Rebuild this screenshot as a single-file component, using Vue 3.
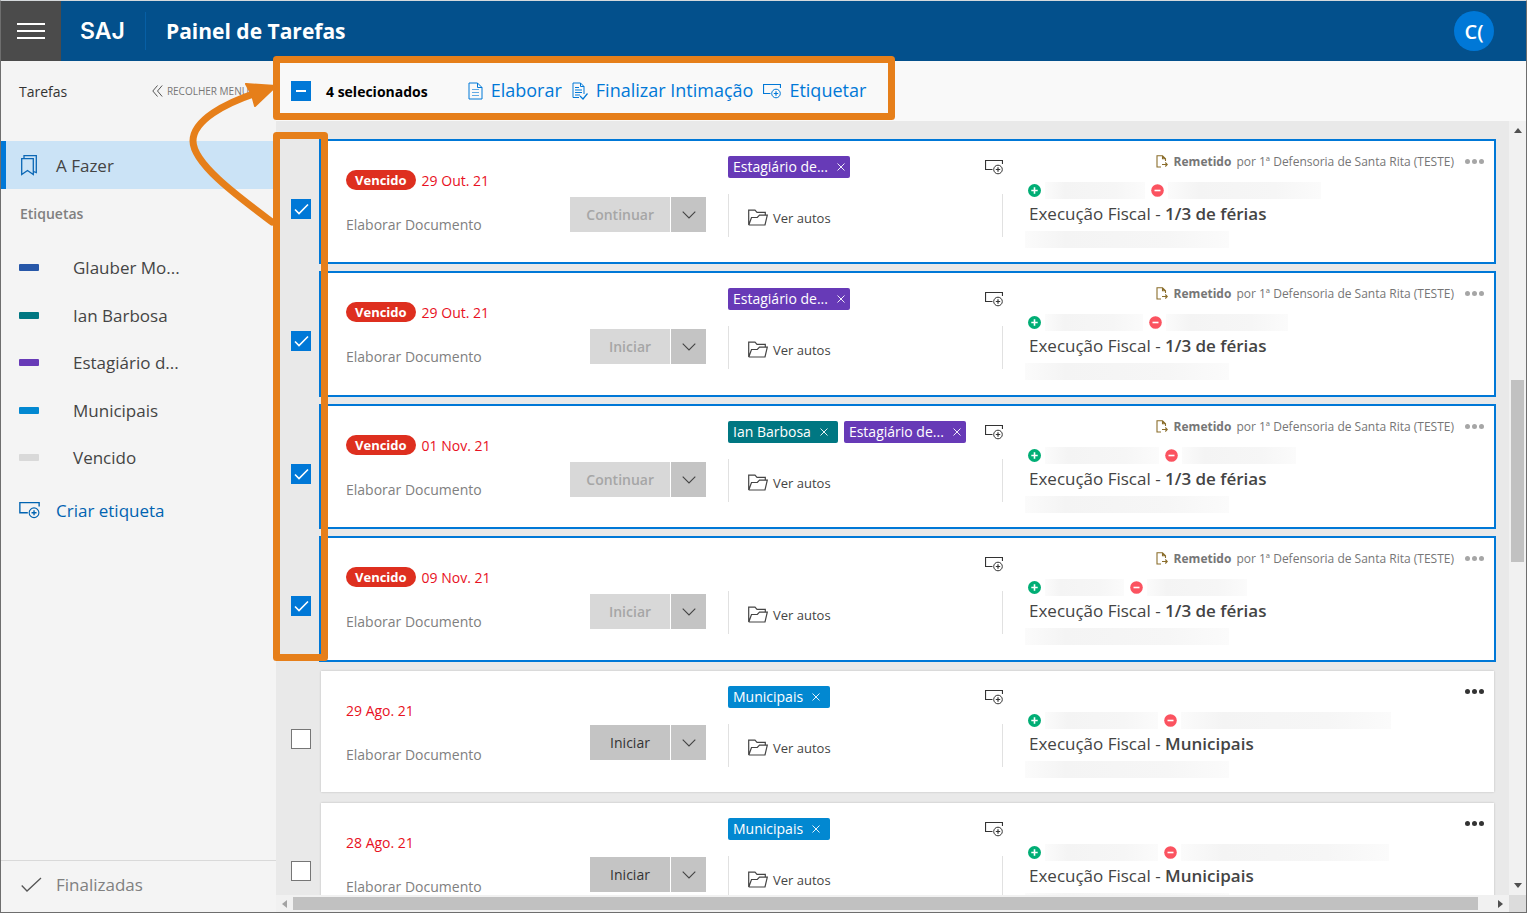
<script setup>
import { ref } from 'vue'

const labels = [
  { name: 'Glauber Mo...', color: '#2757a8' },
  { name: 'Ian Barbosa', color: '#007782' },
  { name: 'Estagiário d...', color: '#673ab7' },
  { name: 'Municipais', color: '#0288d1' },
  { name: 'Vencido', color: '#d9d9d9' },
]

const intern = { name: 'Estagiário de...', color: '#673ab7', full: false }
const ian = { name: 'Ian Barbosa', color: '#007782', full: true }
const city = { name: 'Municipais', color: '#0288d1', full: true }

const tasks = ref([
  { date: '29 Out. 21', late: true, action: 'Continuar', tags: [intern], subject: '1/3 de férias', checked: true, active: 100, passive: 153 },
  { date: '29 Out. 21', late: true, action: 'Iniciar', tags: [intern], subject: '1/3 de férias', checked: true, active: 98, passive: 122 },
  { date: '01 Nov. 21', late: true, action: 'Continuar', tags: [ian, intern], subject: '1/3 de férias', checked: true, active: 114, passive: 114 },
  { date: '09 Nov. 21', late: true, action: 'Iniciar', tags: [], subject: '1/3 de férias', checked: true, active: 79, passive: 100 },
  { date: '29 Ago. 21', late: false, action: 'Iniciar', tags: [city], subject: 'Municipais', checked: false, active: 113, passive: 210 },
  { date: '28 Ago. 21', late: false, action: 'Iniciar', tags: [city], subject: 'Municipais', checked: false, active: 113, passive: 208 },
])
</script>

<template>
  <div class="app">
    <svg class="defs" aria-hidden="true">
      <symbol id="tag-add" viewBox="0 0 18 15">
        <path d="M7.5 9.5H.5V.5H17.5V4" fill="none" stroke="currentColor" stroke-width="1.2" />
        <circle cx="13" cy="9.500" r="4.3" fill="none" stroke="currentColor" />
        <path d="M13 7.3V11.7M10.8 9.5H15.2" stroke="currentColor" stroke-width="1.2" />
      </symbol>
      <symbol id="check" viewBox="0 0 20 20">
        <path d="M4 10.5L8 14.5L17 5.5" fill="none" stroke="currentColor" stroke-width="1.6" />
      </symbol>
    </svg>

    <header class="topbar">
      <button class="burger" aria-label="Menu"><i></i><i></i><i></i></button>
      <span class="logo">SAJ</span>
      <h1>Painel de Tarefas</h1>
      <button class="avatar">C(</button>
    </header>

    <div class="body">
      <nav class="side">
        <div class="side-head">
          <span>Tarefas</span>
          <button class="collapse">
            <svg width="11" height="12" viewBox="0 0 11 12"><path d="M5.5.5L.8 6L5.5 11.5M10.2.5L5.5 6L10.2 11.5" fill="none" stroke="#555" /></svg>
            RECOLHER MENU
          </button>
        </div>
        <a href="#" class="todo">
          <svg width="16" height="21" viewBox="0 0 16 21"><path d="M.7 3.7H12.3V19.5L6.5 15.5L.7 19.5ZM3 3.5V.7H15.3V17.5L12.5 16.5" fill="none" stroke="#0b67b5" stroke-width="1.3" /></svg>
          A Fazer
        </a>
        <h2>Etiquetas</h2>
        <ul>
          <li v-for="l in labels" :key="l.name">
            <a href="#"><i :style="{ background: l.color }"></i>{{ l.name }}</a>
          </li>
        </ul>
        <button class="create">
          <svg width="21" height="17"><use href="#tag-add" /></svg>
          Criar etiqueta
        </button>
        <a href="#" class="done">
          <svg width="21" height="16" viewBox="0 0 21 16"><path d="M.7 8.5L6 14L20 1" fill="none" stroke="#555" stroke-width="1.3" /></svg>
          Finalizadas
        </a>
      </nav>

      <main>
        <div class="toolbar">
          <button class="partial" aria-label="Desmarcar todos"><i></i></button>
          <strong>4 selecionados</strong>
          <div class="tools">
            <button class="tool">
              <svg width="15" height="18" viewBox="0 0 15 18"><path d="M1 1H9.5L14 5.5V17H1ZM9.5 1V5.5H14" fill="none" stroke="currentColor" /><path d="M4 7.5H11M4 10.5H11M4 13.5H11" stroke="currentColor" opacity=".6" /></svg>
              <span>Elaborar</span>
            </button>
            <button class="tool">
              <svg width="16" height="18" viewBox="0 0 16 18"><path d="M7 15.5H1V1H8.5L12 4.5V12M8.5 1V4.5H12" fill="none" stroke="currentColor" /><path d="M3 5.5H7M3 8H10M3 10.5H10M3 13H8" stroke="currentColor" /><path d="M8 14L11 17L15.5 11.5" fill="none" stroke="currentColor" stroke-width="1.2" /></svg>
              <span>Finalizar Intimação</span>
            </button>
            <button class="tool">
              <svg width="18" height="15"><use href="#tag-add" /></svg>
              <span>Etiquetar</span>
            </button>
          </div>
        </div>

        <div class="pane">
          <div class="list">
            <div v-for="(t, n) in tasks" :key="n" class="row">
              <span class="tick">
                <input v-model="t.checked" type="checkbox" :aria-label="'Selecionar tarefa ' + t.date" />
                <svg v-if="t.checked" width="20" height="20"><use href="#check" /></svg>
              </span>
              <article class="card" :class="{ selected: t.checked }">
                <div class="work">
                  <div class="info">
                    <div class="when">
                      <b v-if="t.late">Vencido</b>
                      <time>{{ t.date }}</time>
                    </div>
                    <p>Elaborar Documento</p>
                  </div>
                  <div class="split">
                    <button class="go" :disabled="t.checked">{{ t.action }}</button>
                    <button class="more" aria-label="Mais ações">
                      <svg width="14" height="8" viewBox="0 0 14 8"><path d="M.7.7L7 7L13.3.7" fill="none" stroke="#444" stroke-width="1.1" /></svg>
                    </button>
                  </div>
                </div>

                <div class="middle">
                  <div class="tags">
                    <span v-for="g in t.tags" :key="g.name" class="tag" :class="{ full: g.full }" :style="{ background: g.color }">
                      {{ g.name }}
                      <button aria-label="Remover etiqueta"><svg width="8" height="8" viewBox="0 0 8 8"><path d="M.5.5L7.5 7.5M7.5.5L.5 7.5" stroke="#fff" stroke-width=".9" /></svg></button>
                    </span>
                    <button class="add" aria-label="Adicionar etiqueta"><svg width="18" height="15"><use href="#tag-add" /></svg></button>
                  </div>
                  <div class="files">
                    <a href="#">
                      <svg width="20" height="17" viewBox="0 0 20 17"><path d="M.7 16V1.2H7L9 3.3H17.3V6.2M.7 16H17L19.3 6.2H11.5L9.3 8.5H3.5L.9 15.8" fill="none" stroke="#444" stroke-width="1.2" /></svg>
                      Ver autos
                    </a>
                  </div>
                </div>

                <div class="case">
                  <div class="origin">
                    <template v-if="t.checked">
                      <svg width="12" height="13" viewBox="0 0 12 13"><path d="M5 12H1V.8H6.5L9.5 3.8V6M6.5.8V3.8H9.5M6 9.5H11M9.3 7.5L11.3 9.5L9.3 11.5" fill="none" stroke="#8a6d2b" stroke-width="1.1" /></svg>
                      <b>Remetido</b><span>por 1ª Defensoria de Santa Rita (TESTE)</span>
                    </template>
                    <button class="dots" aria-label="Opções"><i></i><i></i><i></i></button>
                  </div>
                  <div class="parties">
                    <svg width="13" height="13" viewBox="0 0 13 13"><circle cx="6.5" cy="6.5" r="6.5" fill="#00ae75" /><path d="M6.5 3.3V9.7M3.3 6.5H9.7" stroke="#fff" stroke-width="1.6" /></svg>
                    <span class="mask" :style="{ width: t.active + 'px' }"></span>
                    <svg width="13" height="13" viewBox="0 0 13 13"><circle cx="6.5" cy="6.5" r="6.3" fill="#fb5360" /><path d="M3.5 6.5H9.5" stroke="#fff" stroke-width="1.6" /></svg>
                    <span class="mask" :style="{ width: t.passive + 'px' }"></span>
                  </div>
                  <h3>Execução Fiscal - <b>{{ t.subject }}</b></h3>
                  <span class="mask number"></span>
                </div>
              </article>
            </div>
          </div>
          <div class="vbar">
            <svg width="8" height="5"><path d="M0 5L4 0L8 5Z" fill="#505050" /></svg>
            <i></i>
            <svg width="8" height="5"><path d="M0 0L4 5L8 0Z" fill="#505050" /></svg>
          </div>
          <div class="hbar">
            <svg width="5" height="8"><path d="M5 0L0 4L5 8Z" fill="#a3a3a3" /></svg>
            <i></i>
            <svg width="5" height="8"><path d="M0 0L5 4L0 8Z" fill="#505050" /></svg>
          </div>
          <div class="corner"></div>
        </div>
      </main>
    </div>

    <svg class="notes" width="900" height="670" viewBox="0 0 900 670" aria-hidden="true">
      <g fill="none" stroke="#e67f1a" stroke-width="7" stroke-linejoin="round">
        <rect x="276.5" y="59.500" width="615" height="57" />
        <rect x="276.5" y="135.500" width="48" height="522" />
        <path d="M272 222C240 198 193 164 193 141C193 120 226 103 256 93" stroke-linecap="round" />
      </g>
      <path d="M246 84L276 86L255 106L252 95Z" fill="#e67f1a" stroke="#e67f1a" stroke-width="2" stroke-linejoin="round" />
    </svg>
  </div>
</template>

<style>
body { margin: 0; }
</style>

<style scoped>
* { box-sizing: border-box; }
.app {
  position: relative;
  display: flex;
  flex-direction: column;
  height: 100vh;
  overflow: hidden;
  border: 1px solid #6e6e6e;
  border-top-color: #d5d9dc;
  background: #f4f4f4;
  color: #444;
  font-family: "Open Sans", "Noto Sans", sans-serif;
}
button { padding: 0; border: 0; background: none; font: inherit; color: inherit; }
a { color: inherit; text-decoration: none; }
h1, h2, h3, p, ul { margin: 0; padding: 0; list-style: none; }
svg { display: block; flex: none; }
.defs { position: absolute; width: 0; height: 0; }
.notes { position: absolute; left: -1px; top: -1px; pointer-events: none; }

.topbar { display: flex; align-items: center; flex: none; height: 60px; background: #03508c; color: #fff; }
.burger { display: flex; flex-direction: column; align-items: center; justify-content: center; gap: 5px; width: 60px; height: 60px; background: #4b4b4b; }
.burger i { width: 28px; height: 2px; background: #fff; }
.logo { width: 85px; height: 38px; padding-left: 19px; border-right: 1px solid #075fa5; font: 600 23px/38px Inter, sans-serif; }
.topbar h1 { flex: 1; padding-left: 20px; font-size: 21px; line-height: 30px; font-weight: 700; }
.avatar { width: 40px; height: 40px; margin-right: 32px; border-radius: 50%; background: #0078d7; font-size: 20px; font-weight: 600; }

.body { display: flex; flex: 1; min-height: 0; }
.side { display: flex; flex-direction: column; flex: none; width: 275px; }
.side-head { display: flex; align-items: center; justify-content: space-between; height: 60px; padding: 0 27px 0 18px; margin-bottom: 20px; color: #333; font-size: 14px; }
.collapse { display: flex; align-items: center; gap: 4px; color: #777; font-size: 10px; }
.todo { display: flex; align-items: center; gap: 19px; height: 48px; padding-left: 15px; border-left: 5px solid #0078d7; background: #cbe3f6; font-size: 17px; font-weight: 500; }
.side h2 { padding: 0 19px; margin: 13px 0 18px; color: #808080; font-size: 14px; line-height: 23px; font-weight: 600; }
.side li { height: 48px; }
.side li:nth-child(even) { height: 47px; }
.side li a { display: flex; align-items: center; height: 48px; padding-left: 18px; font-size: 17px; }
.side li i { width: 20px; height: 7px; margin-right: 34px; border-radius: 1px; }
.create { display: flex; align-items: center; gap: 16px; height: 48px; margin-top: 5px; padding-left: 18px; color: #0063b1; font-size: 17px; }
.done { display: flex; align-items: center; gap: 14px; height: 52px; margin-top: auto; padding: 0 20px 4px; border-top: 1px solid #d9d9d9; color: #808080; font-size: 17px; }

main { display: flex; flex-direction: column; flex: 1; min-width: 0; }
.toolbar { display: flex; align-items: center; flex: none; height: 60px; padding-left: 15px; background: #f9f9f9; }
.partial { display: grid; place-items: center; width: 20px; height: 20px; background: #0078d7; }
.partial i { width: 10px; height: 2px; background: #fff; }
.toolbar strong { margin-left: 15px; color: #000; font-size: 14px; }
.tools { display: flex; gap: 10px; margin-left: 40px; color: #0078d7; font-size: 18px; font-weight: 500; }
.tool { display: flex; align-items: center; gap: 8px; line-height: 24px; }
.tool span { padding-bottom: 3px; }

.pane { display: grid; grid-template: minmax(0, 1fr) 17px / minmax(0, 1fr) 17px; flex: 1; min-height: 0; background: #e9e9e9; }
.list { overflow: hidden; padding-top: 20px; }
.row { display: flex; height: 132px; padding: 0 15px 11px 15px; }
.row:nth-child(even) { height: 133px; }
.tick { display: grid; align-self: flex-start; flex: none; width: 20px; height: 20px; margin: 58px 10px 0 0; color: #fff; }
.tick > * { grid-area: 1 / 1; pointer-events: none; }
.tick input { width: 20px; height: 20px; margin: 0; appearance: none; border: 1px solid #767676; background: #fff; pointer-events: auto; }
.tick input:checked { border: 0; background: #0078d7; }
.card { display: grid; grid-template-columns: 360px 275px minmax(0, 1fr); gap: 22px; flex: 1; padding-left: 25px; background: #fff; box-shadow: 0 0 2px #bbb; }
.card.selected { box-shadow: 0 0 0 2px #0078d7; }

.work { display: flex; justify-content: space-between; }
.when { display: flex; align-items: center; gap: 6px; height: 20px; margin-top: 29px; color: #e81123; font-size: 14px; }
.when b { height: 20px; padding: 0 9px; border-radius: 10px; background: #de2f1f; color: #fff; font-size: 13px; line-height: 20px; font-weight: 700; }
.info p { margin-top: 24px; color: #808080; font-size: 14px; line-height: 22px; }
.split { display: flex; gap: 1px; height: 35px; margin-top: 54px; }
.selected .split { margin-top: 56px; }
.go { padding: 0 16px; min-width: 80px; background: #c4c4c4; color: #333; font-size: 14px; font-weight: 500; }
.go:disabled { background: #d8d8d8; color: #a6a6a6; font-weight: 600; }
.more { display: grid; place-items: center; width: 35px; background: #c4c4c4; }

.tags { display: flex; gap: 6px; height: 22px; margin-top: 15px; }
.tag { display: flex; align-items: center; gap: 9px; padding: 0 5px; border-radius: 2px; color: #fff; font-size: 14px; line-height: 22px; white-space: nowrap; }
.tag.full { padding-right: 10px; }
.add { margin-left: auto; color: #333; }
.files { display: flex; align-items: center; height: 43px; margin-top: 16px; padding-left: 19px; border: solid #e1e1e1; border-width: 0 1px; }
.files a { display: flex; align-items: center; gap: 5px; padding-top: 4px; font-size: 13px; font-weight: 500; }

.origin { display: flex; align-items: center; justify-content: flex-end; height: 20px; margin: 10px 10px 0 0; color: #767676; font-size: 12px; white-space: nowrap; }
.origin b { margin: 0 5px 0 6px; }
.dots { display: flex; gap: 2px; margin-left: 11px; }
.dots i { width: 5px; height: 5px; border-radius: 50%; background: #333; }
.selected .dots i { background: #a6a6a6; }
.parties { display: flex; align-items: center; gap: 4px; height: 17px; margin: 11px 0 0 3px; }
.mask { height: 17px; background: linear-gradient(90deg, #fbfbfb, #f4f4f4 20%, #f6f6f6 70%, #fbfbfb); }
.parties .mask { margin-right: 2px; }
.case h3 { padding-left: 4px; color: #444; font-size: 17px; line-height: 30px; font-weight: 400; white-space: nowrap; }
.case h3 b { font-weight: 600; }
.number { display: block; width: 204px; margin-top: 2px; }

.vbar { display: flex; flex-direction: column; align-items: center; padding: 7px 0; background: #f1f1f1; }
.vbar i { width: 13px; flex: 0 0 24%; margin: 247px 0 auto; background: #c1c1c1; }
.hbar { display: flex; align-items: center; padding: 0 6px; background: #f1f1f1; }
.hbar i { flex: 1; height: 13px; margin: 0 20px 0 6px; background: #c1c1c1; }
.corner { background: #dcdcdc; }
</style>
